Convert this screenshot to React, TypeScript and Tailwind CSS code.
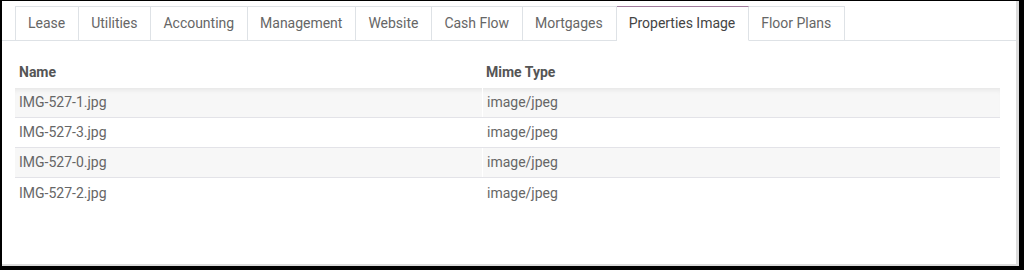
import React from 'react';

const tabs = [
  'Lease',
  'Utilities',
  'Accounting',
  'Management',
  'Website',
  'Cash Flow',
  'Mortgages',
  'Properties Image',
  'Floor Plans',
];

const rows = [
  { name: 'IMG-527-1.jpg', mime: 'image/jpeg' },
  { name: 'IMG-527-3.jpg', mime: 'image/jpeg' },
  { name: 'IMG-527-0.jpg', mime: 'image/jpeg' },
  { name: 'IMG-527-2.jpg', mime: 'image/jpeg' },
];

const ACTIVE = 'Properties Image';

export default function App() {
  return (
    <div
      className="w-[1024px] h-[270px] bg-black pt-px pl-[2px] pr-[5px] pb-[4px]"
      style={{ fontFamily: 'Roboto, "Liberation Sans", sans-serif' }}
    >
      <div className="h-full bg-white border-r-[3px] border-b-[2px] border-[#dcdcdc] flex flex-col">
        {/* tab strip */}
        <div className="flex pl-[13px] pt-[5px] border-b border-[#dee2e6]">
          {tabs.map((tab, i) => {
            const active = tab === ACTIVE;
            return (
              <div
                key={tab}
                className={`h-[35px] flex items-center pl-[12px] pr-[13px] text-[14px] tracking-[-0.02px] border-r border-[#dee2e6] -mb-px ${
                  i === 0 ? 'border-l' : ''
                } ${
                  active
                    ? 'bg-white text-[#444] border-t border-t-[#a07c9c] border-b border-b-white'
                    : 'text-[#666] border-t border-t-[#dee2e6] border-b border-b-[#dee2e6]'
                }`}
              >
                {tab}
              </div>
            );
          })}
        </div>

        {/* attachment list */}
        <div className="ml-[13px] mr-[16px] mt-[16px] text-[14px]">
          <div className="grid grid-cols-[467px_1fr] h-[31px] items-center font-bold text-[#555]">
            <div className="pl-[4px]">Name</div>
            <div className="pl-[4px]">Mime Type</div>
          </div>
          {rows.map((row, i) => (
            <div
              key={row.name}
              className={`grid grid-cols-[467px_1fr] h-[30px] items-center text-[#666] ${
                i % 2 === 0 ? 'bg-[#f7f7f7]' : 'bg-white'
              } ${i < rows.length - 1 ? 'border-b border-[#e3e3e8]' : ''} ${
                i === 0 ? 'shadow-[inset_0_5px_5px_-3px_rgba(0,0,0,0.07)]' : ''
              }`}
            >
              <div className="pl-[4px] h-full flex items-center">{row.name}</div>
              <div className="pl-[4px] h-full flex items-center border-l border-white">{row.mime}</div>
            </div>
          ))}
        </div>
      </div>
    </div>
  );
}
